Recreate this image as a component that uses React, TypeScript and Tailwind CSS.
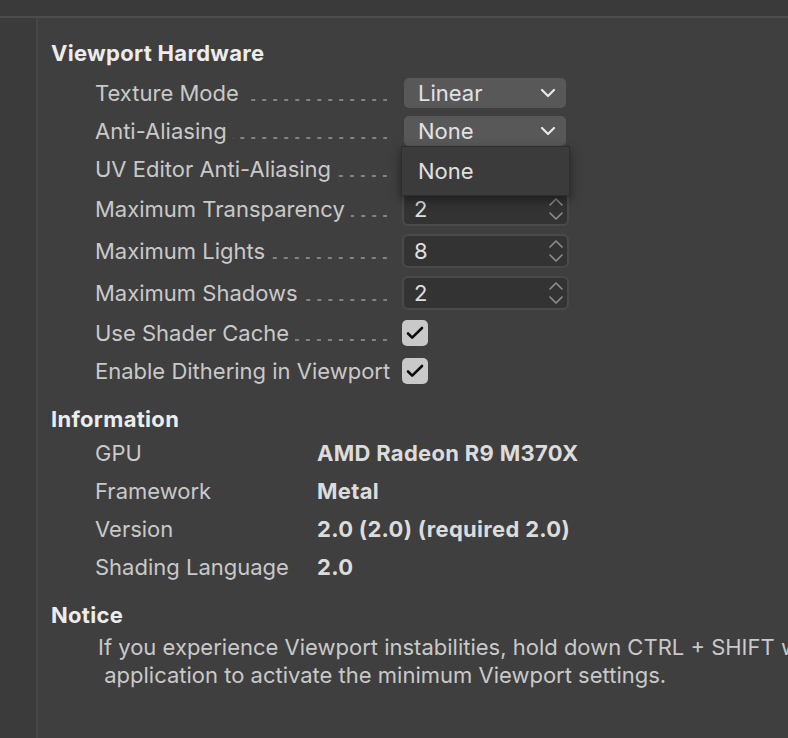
import React from "react";

const font = { fontFamily: "Inter, 'Noto Sans', sans-serif" };

function Leader() {
  return (
    <span className="flex-1 self-end h-[2px] mb-[5px] ml-[6px] bg-[linear-gradient(to_right,transparent_0_7px,#838383_7px_11px)] bg-[length:11px_2px] bg-repeat-x bg-right" />
  );
}

function Chevron() {
  return (
    <svg width="16" height="10" viewBox="0 0 16 10" fill="none">
      <path d="M2 2l6 6 6-6" stroke="#e8e8e8" strokeWidth="2.2" strokeLinecap="round" strokeLinejoin="round" />
    </svg>
  );
}

function Stepper() {
  return (
    <svg width="16" height="28" viewBox="0 0 16 28" fill="none">
      <path d="M2 10l6-6 6 6" stroke="#8e8e8e" strokeWidth="1.6" strokeLinecap="round" strokeLinejoin="round" />
      <path d="M2 18l6 6 6-6" stroke="#8e8e8e" strokeWidth="1.6" strokeLinecap="round" strokeLinejoin="round" />
    </svg>
  );
}

function Select({ value, open }: { value: string; open?: boolean }) {
  return (
    <div className="relative ml-[2px]">
      <div className="w-[162px] h-[30px] rounded-[5px] bg-[#585858] flex items-center justify-between pl-[14px] pr-[10px] text-[#e2e2e2]">
        <span>{value}</span>
        <Chevron />
      </div>
      {open && (
        <div className="absolute left-[-3px] top-[30px] w-[169px] h-[50px] bg-[#3b3b3b] border border-[#2e2e2e] shadow-[0_4px_10px_rgba(0,0,0,0.45)] flex items-center pl-[16px] text-[#e0e0e0] z-10">
          None
        </div>
      )}
    </div>
  );
}

function NumberInput({ value }: { value: string }) {
  return (
    <div className="w-[167px] h-[34px] rounded-[6px] bg-[#333333] border-2 border-[#4a4a4a] flex items-center justify-between pl-[10px] pr-[3px] text-[#dedede]">
      <span>{value}</span>
      <Stepper />
    </div>
  );
}

function Check() {
  return (
    <div className="w-[26px] h-[26px] rounded-[5px] bg-[#c9c9c9] flex items-center justify-center">
      <svg width="18" height="14" viewBox="0 0 18 14" fill="none">
        <path d="M2 7.5l4.2 4.2L16 2" stroke="#0d0d0d" strokeWidth="2.6" strokeLinecap="round" strokeLinejoin="round" />
      </svg>
    </div>
  );
}

function Row({ label, h, children, leader = true }: { label: string; h: string; children: React.ReactNode; leader?: boolean }) {
  return (
    <div className={`flex items-center ${h}`}>
      <div className="w-[307px] h-[26px] flex pr-[15px]">
        <span className="whitespace-nowrap">{label}</span>
        {leader && <Leader />}
      </div>
      {children}
    </div>
  );
}

function Info({ label, value }: { label: string; value: string }) {
  return (
    <div className="flex items-center h-[38px]">
      <span className="w-[222px] whitespace-nowrap">{label}</span>
      <span className="font-bold text-[#dcdcdc] whitespace-nowrap tracking-[0.3px]">{value}</span>
    </div>
  );
}

export default function App() {
  return (
    <div style={font} className="w-[788px] h-[738px] overflow-hidden bg-[#3f3f3f] flex flex-col text-[22px] text-[#c9c9c9] leading-[26px]">
      <div className="h-[18px] bg-[#3a3a3a] border-b-2 border-[#4c4c4c] shrink-0" />
      <div className="flex flex-1 min-h-0">
        <div className="w-[38px] shrink-0 bg-[#3b3b3b] border-r-2 border-[#474747]" />
        <div className="flex-1 min-w-0 pl-[13px] pt-[22px]">
          <div className="font-bold text-[#ececec] h-[26px] mb-[8px] tracking-[0.3px]">Viewport Hardware</div>
          <div className="pl-[44px]">
            <Row label="Texture Mode" h="h-[38px]"><Select value="Linear" /></Row>
            <Row label="Anti-Aliasing" h="h-[38px]"><Select value="None" open /></Row>
            <Row label="UV Editor Anti-Aliasing" h="h-[38px]"><Select value="None" /></Row>
            <Row label="Maximum Transparency" h="h-[42px]"><NumberInput value="2" /></Row>
            <Row label="Maximum Lights" h="h-[42px]"><NumberInput value="8" /></Row>
            <Row label="Maximum Shadows" h="h-[42px]"><NumberInput value="2" /></Row>
            <Row label="Use Shader Cache" h="h-[38px]"><Check /></Row>
            <Row label="Enable Dithering in Viewport" h="h-[38px]" leader={false}><Check /></Row>
          </div>
          <div className="font-bold text-[#ececec] h-[26px] mt-[16px] mb-[2px] tracking-[0.3px]">Information</div>
          <div className="pl-[44px]">
            <Info label="GPU" value="AMD Radeon R9 M370X" />
            <Info label="Framework" value="Metal" />
            <Info label="Version" value="2.0 (2.0) (required 2.0)" />
            <Info label="Shading Language" value="2.0" />
          </div>
          <div className="font-bold text-[#ececec] h-[26px] mt-[16px] mb-[5px] tracking-[0.3px]">Notice</div>
          <div className="pl-[47px] leading-[28px] whitespace-pre overflow-hidden">
            <div>If you experience Viewport instabilities, hold down CTRL + SHIFT while launching the</div>
            <div> application to activate the minimum Viewport settings.</div>
          </div>
        </div>
      </div>
    </div>
  );
}
